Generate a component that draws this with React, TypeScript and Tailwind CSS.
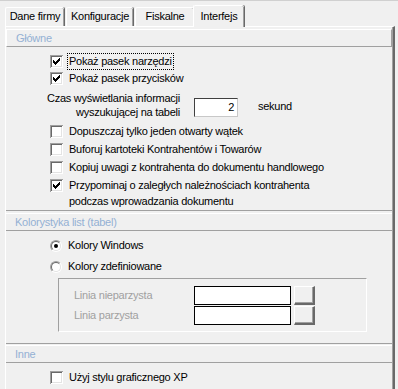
import React from "react";

const CHECK_PIXELS = [
  [6, 0],
  [5, 1], [6, 1],
  [0, 2], [4, 2], [5, 2], [6, 2],
  [0, 3], [1, 3], [3, 3], [4, 3], [5, 3],
  [0, 4], [1, 4], [2, 4], [3, 4], [4, 4],
  [1, 5], [2, 5], [3, 5],
  [2, 6],
];

function CheckBox({ checked }: { checked?: boolean }) {
  return (
    <span className="w-[13px] h-[13px] shrink-0 bg-white flex items-center justify-center shadow-[inset_1px_1px_0_#a0a0a0,inset_-1px_-1px_0_#ffffff,inset_2px_2px_0_#696969,inset_-2px_-2px_0_#e3e3e3]">
      {checked && (
        <svg width="7" height="7" viewBox="0 0 7 7" shapeRendering="crispEdges">
          {CHECK_PIXELS.map(([x, y]) => (
            <rect key={`${x}-${y}`} x={x} y={y} width="1" height="1" fill="#000" />
          ))}
        </svg>
      )}
    </span>
  );
}

function Radio({ checked }: { checked?: boolean }) {
  return (
    <span className="w-[12px] h-[12px] shrink-0 rounded-full border border-t-[#a0a0a0] border-l-[#a0a0a0] border-r-white border-b-white flex">
      <span className="flex-1 rounded-full bg-white border border-t-[#696969] border-l-[#696969] border-r-[#e3e3e3] border-b-[#e3e3e3] flex items-center justify-center">
        {checked && <span className="w-[4px] h-[4px] rounded-full bg-black" />}
      </span>
    </span>
  );
}

function CheckRow({ label, checked, focus, h = "h-[18px]" }: { label: string; checked?: boolean; focus?: boolean; h?: string }) {
  return (
    <div className={`flex items-center ${h}`}>
      <CheckBox checked={checked} />
      <span className={`ml-[5px] px-[1px] leading-[15px] ${focus ? "outline outline-1 outline-dotted outline-black" : ""}`}>
        {label}
      </span>
    </div>
  );
}

function Tab({ label, w, ml, active }: { label: string; w: string; ml: string; active?: boolean }) {
  return (
    <div
      className={`${w} ${ml} ${
        active ? "h-[22px] -mb-[1px] relative z-10 bg-[#f0f0f0]" : "h-[19px]"
      } rounded-t-[2px] border-t border-l border-white shadow-[inset_-1px_0_0_#a0a0a0,1px_0_0_#696969] flex items-center justify-center pb-[1px]`}
    >
      {label}
    </div>
  );
}

function SectionHeader({ label, boxed }: { label: string; boxed?: boolean }) {
  return (
    <div
      className={`h-[18px] flex items-center pl-[9px] text-[#94b0d4] border-t border-t-white border-b border-b-[#a0a0a0] ${
        boxed ? "border-l border-l-white border-r border-r-[#a0a0a0] pl-[7px]" : ""
      }`}
    >
      {label}
    </div>
  );
}

export default function App() {
  return (
    <div
      className="w-[398px] h-[389px] overflow-hidden bg-[#f0f0f0] text-[11px] tracking-[-0.25px] text-black border-t border-t-[#d0d0d0] flex flex-col"
      style={{ fontFamily: '"Liberation Sans", Arial, sans-serif' }}
    >
      {/* Tabs */}
      <div className="flex items-end h-[21px] mt-[4px] pl-[5px]">
        <Tab label="Dane firmy" w="w-[59px]" ml="ml-0" />
        <Tab label="Konfiguracje" w="w-[67px]" ml="ml-[2px]" />
        <Tab label="Fiskalne" w="w-[59px]" ml="ml-[2px]" />
        <Tab label="Interfejs" w="w-[51px]" ml="-ml-[1px]" active />
      </div>

      {/* Panel */}
      <div className="ml-[5px] w-[390px] flex-1 border-t border-l border-white border-r-2 border-r-[#696969] shadow-[inset_-1px_0_0_#a0a0a0] flex flex-col">
        <div className="mt-[2px] mr-[1px]">
          <SectionHeader label="Główne" boxed />
        </div>

        {/* Główne */}
        <div className="pl-[44px] mt-[6px]">
          <CheckRow label="Pokaż pasek narzędzi" checked focus h="h-[17px]" />
          <CheckRow label="Pokaż pasek przycisków" checked h="h-[17px]" />
        </div>

        <div className="flex mt-[4px] h-[28px]">
          <div className="w-[174px] text-right leading-[14px]">
            <div>Czas wyświetlania informacji</div>
            <div>wyszukującej na tabeli</div>
          </div>
          <div className="ml-[14px] mt-[7px] w-[44px] h-[19px] bg-white border border-t-[#404040] border-l-[#404040] border-r-[#c8c8c8] border-b-[#c8c8c8] flex items-center justify-end pr-[3px]">
            2
          </div>
          <div className="ml-[20px] mt-[8px] leading-[14px]">sekund</div>
        </div>

        <div className="pl-[44px] mt-[3px]">
          <CheckRow label="Dopuszczaj tylko jeden otwarty wątek" />
          <CheckRow label="Buforuj kartoteki Kontrahentów i Towarów" />
          <CheckRow label="Kopiuj uwagi z kontrahenta do dokumentu handlowego" />
          <div className="flex items-start mt-[1px]">
            <div className="mt-[2px]">
              <CheckBox checked />
            </div>
            <div className="ml-[5px] px-[1px] leading-[16px]">
              <div>Przypominaj o zaległych należnościach kontrahenta</div>
              <div>podczas wprowadzania dokumentu</div>
            </div>
          </div>
        </div>

        {/* Kolorystyka */}
        <div className="mt-[1px] h-px bg-[#a0a0a0] mr-[1px]" />
        <div className="mt-[2px] mr-[1px]">
          <SectionHeader label="Kolorystyka list (tabel)" />
        </div>

        <div className="pl-[44px] mt-[4px]">
          <div className="flex items-center h-[21px]">
            <Radio checked />
            <span className="ml-[6px]">Kolory Windows</span>
          </div>
          <div className="flex items-center h-[21px]">
            <Radio />
            <span className="ml-[6px]">Kolory zdefiniowane</span>
          </div>
        </div>

        <div className="mt-[1px] ml-[52px] w-[309px] h-[54px] border border-t-[#a0a0a0] border-l-[#a0a0a0] border-r-white border-b-white pt-[7px] pl-[15px] flex flex-col gap-[1px]">
          {["Linia nieparzysta", "Linia parzysta"].map((l) => (
            <div key={l} className="flex items-center h-[19px]">
              <span className="w-[120px] text-[#a0a0a0]">{l}</span>
              <div className="w-[97px] h-[19px] bg-white border border-black" />
              <div className="ml-[3px] w-[21px] h-[19px] border-t border-l border-white border-r-2 border-b-2 border-r-[#696969] border-b-[#696969] shadow-[inset_-1px_-1px_0_#a0a0a0]" />
            </div>
          ))}
        </div>

        {/* Inne */}
        <div className="mt-[11px] h-px bg-[#a0a0a0] mr-[1px]" />
        <div className="mt-[1px] mr-[1px]">
          <SectionHeader label="Inne" />
        </div>

        <div className="pl-[44px] mt-[5px]">
          <CheckRow label="Użyj stylu graficznego XP" h="h-[19px]" />
        </div>
      </div>
    </div>
  );
}
